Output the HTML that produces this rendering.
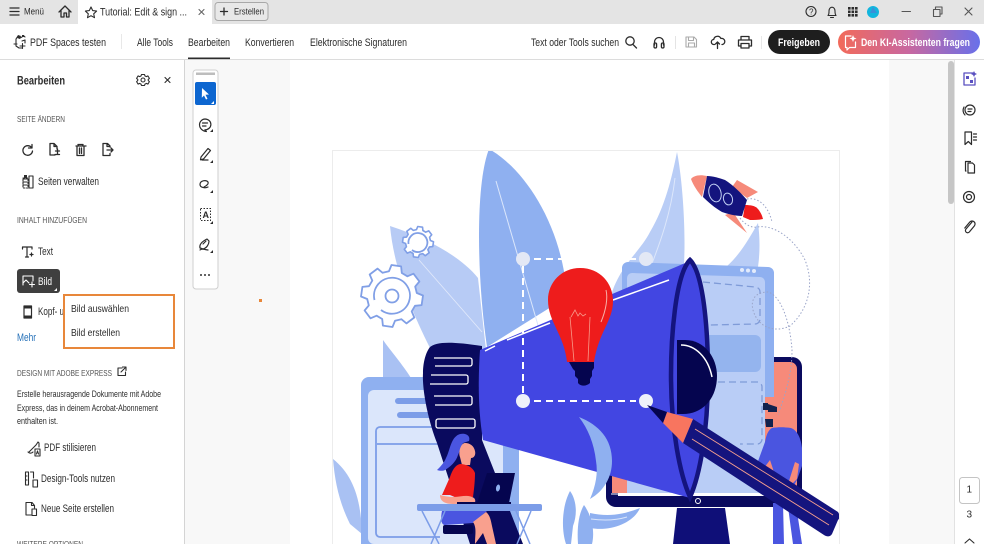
<!DOCTYPE html>
<html lang="de"><head><meta charset="utf-8"><title>Acrobat</title>
<style>
html,body{margin:0;padding:0;background:#fff;width:984px;height:544px;overflow:hidden}
svg{display:block;filter:blur(.3px)}
text{font-family:"Liberation Sans",sans-serif;fill:#2c2c2c}
.i{fill:none;stroke:#2c2c2c;stroke-width:1.1;stroke-linecap:round;stroke-linejoin:round}
.h{font-size:8px;fill:#555}
.d{fill:none;stroke:#fff;stroke-width:2;stroke-dasharray:7 5}
</style></head><body>
<svg xmlns="http://www.w3.org/2000/svg" width="984" height="544" viewBox="0 0 984 544" font-size="10">
<defs>
<linearGradient id="g" x1="0" x2="1" y1="0" y2="0"><stop offset="0" stop-color="#f26a5a"/><stop offset=".5" stop-color="#c868a0"/><stop offset="1" stop-color="#6870ea"/></linearGradient>
<clipPath id="pg"><rect x="333" y="151" width="506" height="393"/></clipPath>
</defs>
<!-- chrome -->
<rect width="984" height="544" fill="#f8f8f8"/>
<rect width="984" height="24" fill="#e4e4e4"/>
<rect x="78" y="0" width="134" height="24" fill="#fff"/>
<rect y="24" width="984" height="35" fill="#fff"/>
<rect y="59" width="984" height="1" fill="#dcdcdc"/>
<rect y="60" width="184" height="484" fill="#fff"/>
<rect x="184" y="60" width="1" height="484" fill="#d4d4d4"/>
<rect x="290" y="60" width="599" height="484" fill="#fff"/>
<rect x="954" y="60" width="30" height="484" fill="#fff"/>
<rect x="954" y="60" width="1" height="484" fill="#e2e2e2"/>
<rect x="948" y="61" width="6" height="143" rx="3" fill="#c6c6c6"/>
<!-- title bar -->
<path class="i" style="stroke-width:1.3" d="M10 8h9M10 11.500h9M10 15h9"/>
<text x="24" y="14.500" font-size="9" textLength="20" lengthAdjust="spacingAndGlyphs">Menü</text>
<path class="i" style="stroke-width:1.3" d="M59 12l6-6 6 6M61 10.500V17h3v-4h2.500v4H69v-6.500"/>
<path class="i" d="M91 7l1.700 3.600 3.900.5-2.900 2.700.8 3.900-3.500-2-3.500 2 .8-3.900-2.900-2.700 3.900-.5z"/>
<text x="100" y="15.500" font-size="11" textLength="87" lengthAdjust="spacingAndGlyphs">Tutorial: Edit &amp; sign ...</text>
<path class="i" style="stroke:#666" d="M199 9.500l5 5M204 9.500l-5 5"/>
<rect x="215" y="2.500" width="53" height="18" rx="3" fill="#e8e8e8" stroke="#a8a8a8"/>
<path class="i" style="stroke-width:1.300" d="M224 8v7M220.500 11.500h7"/>
<text x="234" y="14.500" font-size="9.500" textLength="30" lengthAdjust="spacingAndGlyphs">Erstellen</text>
<!-- title right icons -->
<circle cx="811" cy="11.500" r="5" class="i"/><text x="809" y="14.500" font-size="8">?</text>
<path class="i" d="M828 15.500c1.200-1.400 1-2.500 1-4.500 0-2 1.200-3.800 3-3.800s3 1.800 3 3.800c0 2 0 3.100 1 4.500zM830.500 17.500h3"/>
<g fill="#2c2c2c"><rect x="848" y="7" width="2.600" height="2.600"/><rect x="851.500" y="7" width="2.600" height="2.600"/><rect x="855" y="7" width="2.600" height="2.600"/><rect x="848" y="10.500" width="2.600" height="2.600"/><rect x="851.500" y="10.500" width="2.600" height="2.600"/><rect x="855" y="10.500" width="2.600" height="2.600"/><rect x="848" y="14" width="2.600" height="2.600"/><rect x="851.500" y="14" width="2.600" height="2.600"/><rect x="855" y="14" width="2.600" height="2.600"/></g>
<circle cx="873" cy="12" r="6" fill="#12b5de"/><path d="M873 7l4 6h-7z" fill="#3a8fd8"/>
<path class="i" style="stroke:#555" d="M902 11.500h8.500M933.500 9.500h6.500v7h-6.500zM935.500 9.500V7h6.500v7h-2M965 8l7 7M972 8l-7 7"/>
<!-- toolbar -->
<g transform="translate(-2 0)">
<path class="i" d="M20 36l-2 3v7l3 2h3M16 44h3M22 38l2-1M26 36l1 1M24 41l3-1v3M22 46h5M24.500 43.500v5"/><path d="M20 35l3 1-1 3-3-1zM24 35h2v2h-2z" fill="#2c2c2c"/>
</g>
<text x="30" y="46" font-size="11" textLength="76" lengthAdjust="spacingAndGlyphs">PDF Spaces testen</text>
<rect x="121" y="34" width="1" height="15" fill="#e8e8e8"/>
<text x="137" y="46" font-size="11" textLength="36" lengthAdjust="spacingAndGlyphs">Alle Tools</text>
<text x="188" y="46" font-size="11" textLength="42" lengthAdjust="spacingAndGlyphs">Bearbeiten</text>
<rect x="188" y="57.500" width="42" height="1.600" fill="#2c2c2c"/>
<text x="245" y="46" font-size="11" textLength="49" lengthAdjust="spacingAndGlyphs">Konvertieren</text>
<text x="310" y="46" font-size="11" textLength="97" lengthAdjust="spacingAndGlyphs">Elektronische Signaturen</text>
<text x="531" y="46" font-size="11" textLength="88" lengthAdjust="spacingAndGlyphs">Text oder Tools suchen</text>
<circle cx="630" cy="41" r="4.200" class="i" style="stroke-width:1.300"/><path class="i" style="stroke-width:1.300" d="M633 44.500l3.500 3.500"/>
<path class="i" style="stroke-width:1.300" d="M654.500 45v-3a4.500 4.500 0 0 1 9 0v3"/><rect x="654" y="43" width="2.600" height="5" rx="1.200" class="i" style="stroke-width:1.300"/><rect x="661.400" y="43" width="2.600" height="5" rx="1.200" class="i" style="stroke-width:1.300"/>
<rect x="675" y="36" width="1" height="13" fill="#e4e4e4"/>
<path class="i" style="stroke:#aaa" d="M686 37h8l2.500 2.500V47h-10.500zM688.500 37v3.500h5V37M688.500 47v-4h6v4"/>
<path class="i" style="stroke-width:1.300" d="M714.500 44.500h-.5a2.500 2.500 0 0 1-.3-5 3.800 3.800 0 0 1 7.200-1 3 3 0 0 1 1.600 6h-.5M717.500 48.500v-6.500M715.500 44l2-2 2 2"/>
<path class="i" style="stroke-width:1.300" d="M741 40v-3.500h8V40M741 46h-2.500v-6h13v6H749M741 43.500h8V48h-8z"/>
<rect x="761" y="36" width="1" height="13" fill="#e8e8e8"/>
<rect x="768" y="30" width="62" height="24" rx="12" fill="#1e1e1e"/>
<text x="778" y="46" font-size="11" font-weight="bold" style="fill:#fff" textLength="42" lengthAdjust="spacingAndGlyphs">Freigeben</text>
<rect x="838" y="30" width="142" height="24" rx="12" fill="url(#g)"/>
<path class="i" style="stroke:#fff;stroke-width:1.200" d="M851 36h-5.500v11.500H847v2.500l2.500-2.500h6V42"/><path d="M853 35l1 2.500 2.500 1-2.500 1-1 2.500-1-2.500-2.500-1 2.500-1z" fill="#fff"/>
<text x="861" y="46" font-size="11" font-weight="bold" style="fill:#fff" textLength="109" lengthAdjust="spacingAndGlyphs">Den KI-Assistenten fragen</text>
<!-- left panel -->
<text x="17" y="84.500" font-size="12" font-weight="bold" textLength="48" lengthAdjust="spacingAndGlyphs">Bearbeiten</text>
<circle cx="143" cy="80" r="2" class="i"/><path class="i" d="M141.500 74.500h3l.5 1.500 1.500.6 1.400-.7 1.500 2.500-1.200 1 .1 1.200 1.100 1-1.500 2.500-1.400-.7-1.500.7-.5 1.400h-3l-.5-1.400-1.500-.7-1.400.7-1.500-2.500 1.100-1 .1-1.200-1.200-1 1.500-2.500 1.400.7 1.500-.6z"/>
<path class="i" d="M165 77.500l5 5M170 77.500l-5 5"/>
<text x="17" y="122" class="h" textLength="48" lengthAdjust="spacingAndGlyphs">SEITE ÄNDERN</text>
<path class="i" style="stroke-width:1.300" d="M31.500 147.500a4.800 4.800 0 1 0 1 3.500M32 144.500v3.500h-3.500"/>
<path class="i" style="stroke-width:1.300" d="M55 155h-5v-11.500h4l3 3V149M54 143.500v3h3M55.500 151h4M57.500 149v5.500M55 154.500h4.500"/>
<path class="i" style="stroke-width:1.300" d="M76 146h10M78.500 146l-.5-1.500h5l-.5 1.500M77 146v9.500h7V146M79.500 148v5.500M81.500 148v5.500"/>
<path class="i" style="stroke-width:1.300" d="M110 147v-1l-2.500-2.500H103v12h7v-2M107 143.500v3h3M107 150h6M111 148l2 2-2 2"/>
<path class="i" d="M29 176h4v12h-4zM23 179h4M23 182h4M23 185h4"/><path class="i" style="stroke-dasharray:1.500 1.500" d="M23 178h5v10h-5z"/><path d="M24 175h3v3h-3z" fill="#2c2c2c"/>
<text x="38" y="185" font-size="11" textLength="61" lengthAdjust="spacingAndGlyphs">Seiten verwalten</text>
<text x="17" y="223" class="h" textLength="70" lengthAdjust="spacingAndGlyphs">INHALT HINZUFÜGEN</text>
<path class="i" style="stroke-width:1.200" d="M22.500 249v-2h9.500v2M27 247v10M25.500 257h3M30 254.500h3M31.500 253v3"/>
<text x="38" y="255" font-size="11" textLength="15" lengthAdjust="spacingAndGlyphs">Text</text>
<rect x="17" y="269" width="43" height="24" rx="3" fill="#3f3f3f"/>
<path class="i" style="stroke:#fff" d="M23 285v-9h10v5M23 283l3-3 3 3M32 282v5M29.500 284.500h5"/>
<text x="38" y="285" font-size="11" style="fill:#fff" textLength="14" lengthAdjust="spacingAndGlyphs">Bild</text>
<path d="M57 288v3h-3z" fill="#fff"/>
<path class="i" style="stroke-width:1.200" d="M24 306h7.500v12H24z"/><path d="M24 306h7.500v2.500H24zM24 315.500h7.500v2.500H24z" fill="#2c2c2c"/>
<text x="38" y="315" font-size="11" textLength="35" lengthAdjust="spacingAndGlyphs">Kopf- und</text>
<text x="17" y="341" font-size="11" style="fill:#2470b8" textLength="19" lengthAdjust="spacingAndGlyphs">Mehr</text>
<rect x="64" y="295" width="110" height="53" fill="#fff" stroke="#e8873a" stroke-width="2"/>
<text x="71" y="312" font-size="10.500" textLength="58" lengthAdjust="spacingAndGlyphs">Bild auswählen</text>
<text x="71" y="336" font-size="10.500" textLength="49" lengthAdjust="spacingAndGlyphs">Bild erstellen</text>
<text x="17" y="376" class="h" textLength="95" lengthAdjust="spacingAndGlyphs">DESIGN MIT ADOBE EXPRESS</text>
<path class="i" d="M122 368h-4v7.500h7.500V372M121 372l4.500-4.500M122.500 367h3.500v3.500"/>
<text x="17" y="397" font-size="9.500" textLength="144" lengthAdjust="spacingAndGlyphs">Erstelle herausragende Dokumente mit Adobe</text>
<text x="17" y="411" font-size="9.500" textLength="141" lengthAdjust="spacingAndGlyphs">Express, das in deinem Acrobat-Abonnement</text>
<text x="17" y="424" font-size="9.500" textLength="41" lengthAdjust="spacingAndGlyphs">enthalten ist.</text>
<path class="i" d="M29 452l7-7 2-3 1 1v4M28 452c2 2 4 1 5 0M35 449h5v7h-5zM36.500 454l1-3 1 3"/>
<text x="44" y="451" font-size="11" textLength="52" lengthAdjust="spacingAndGlyphs">PDF stilisieren</text>
<path class="i" d="M25.500 472h3v13h-3zM30.500 472h3v6M33 480h4.500v7H33zM25.500 476h1.500M25.500 480h1.500"/>
<text x="41" y="482" font-size="11" textLength="74" lengthAdjust="spacingAndGlyphs">Design-Tools nutzen</text>
<path class="i" d="M31 515h-5v-12.500h6l2.500 3V508M31.500 502.500v3h3M32 509h4.500v6.500H32z"/>
<text x="41" y="512" font-size="11" textLength="73" lengthAdjust="spacingAndGlyphs">Neue Seite erstellen</text>
<text x="17" y="547" class="h" textLength="66" lengthAdjust="spacingAndGlyphs">WEITERE OPTIONEN</text>
<!-- floating tools -->
<rect x="193" y="70" width="25" height="219" rx="3" fill="#fff" stroke="#cfcfcf"/>
<rect x="196" y="72.500" width="19" height="2.500" fill="#bdbdbd"/>
<rect x="195" y="82" width="21" height="23" rx="2" fill="#0d66d0"/>
<path d="M202 88l7 6.500-3.500.3 2 4-1.500.7-2-4-2.200 2.300z" fill="#fff"/><path d="M214 101v3h-3z" fill="#fff"/>
<path class="i" style="stroke-width:1.200" d="M205 119a5.500 5 0 1 1-.1 10.800l1.500 1.700c-4-.5-6.900-3.200-6.900-6.700 0-3 2.500-5.800 5.500-5.800zM202.500 123h5M202.500 126h3.500"/>
<path d="M213 129v3h-3zM213 160v3h-3zM213 190v3h-3zM213 221v3h-3zM213 250v3h-3z" fill="#2c2c2c"/>
<path class="i" style="stroke-width:1.200" d="M201 157l7-8.500 2.500 2-7 8.500-3 .8zM202 160h6"/>
<path class="i" style="stroke-width:1.200" d="M208 182c-2-2.500-8-1.500-8 2.500 0 3 5 4 8 2.500M204 187c2-1 5-3 4-5"/>
<rect x="200.500" y="208.500" width="10" height="12" fill="none" stroke="#2c2c2c" stroke-dasharray="1.500 1.500"/>
<text x="202.500" y="218" font-size="9" font-weight="bold">A</text>
<path class="i" style="stroke-width:1.200" d="M200 248c-1-4 3-7 7-9l2 2c0 3-2 7-6 8zM203 244l3-3M200 250c2-2 6 0 8 0"/>
<g fill="#333"><circle cx="201" cy="275" r="1"/><circle cx="205" cy="275" r="1"/><circle cx="209" cy="275" r="1"/></g>
<rect x="259" y="299" width="3" height="3" fill="#e8873a"/>
<!-- right rail -->
<path class="i" style="stroke:#5a50c0;stroke-width:1.300" d="M973 73h-9v12h11v-7"/><path d="M966 76h3v3h-3zM970 80h3v3h-3zM974 71l1 2 2 1-2 1-1 2-1-2-2-1 2-1z" fill="#5a50c0"/>
<circle cx="970" cy="110" r="5" class="i" style="stroke-width:1.200"/><path class="i" style="stroke-width:1.200" d="M965 115a6.500 6.500 0 0 1-1-8M968 109h4M968 111.500h3"/>
<path class="i" style="stroke-width:1.200" d="M965 132h6.500v12.500l-3.200-3-3.300 3zM973.500 134h3M973.500 137h3M973.500 140h3"/>
<path class="i" style="stroke-width:1.200" d="M968 173h6.500v-8l-2-2H968zM966 171h-.5v-9.500h5"/>
<circle cx="969" cy="197" r="5.500" class="i" style="stroke-width:1.200"/><circle cx="969" cy="197" r="2.500" class="i" style="stroke-width:1.200"/>
<path class="i" style="stroke-width:1.200" d="M972 222l-6 7a2.200 2.200 0 0 0 3.300 3l5-6a3 3 0 0 0-4.500-4l-5 6"/>
<rect x="959.500" y="477.500" width="20" height="26" rx="3" fill="#fff" stroke="#c4c4c4"/>
<text x="966.500" y="492.500" font-size="10">1</text><text x="966.500" y="517.500" font-size="10">3</text>
<path class="i" d="M965 543l4.500-4 4.500 4"/>
<!-- page image -->
<path d="M332.500 544V150.500H839.500V544" fill="#fff" stroke="#ececec"/>
<g clip-path="url(#pg)">
<!-- leaves -->
<path d="M333 459c20 16 28 40 29 75l-12-10c-10-20-15-40-17-65z" fill="#a9c1f3"/>
<path d="M383 340c7 10 20 25 28 38h-28z" fill="#a9c1f3"/>
<path d="M390 226c40 13 72 32 88 52l8 72-56-2c-20-40-36-80-40-122z" fill="#b7cbf5"/>
<path d="M419 260l63 72" stroke="#e2eafb" fill="none" stroke-width=".8"/>
<path d="M489 149c-14 36-12 130-2 198l80-50c-4-70-42-128-78-148z" fill="#8fb0f0"/>
<path d="M496 181l46 158" stroke="#dbe6fb" stroke-width="1" fill="none"/>
<path d="M677 152c5 25 9 75 7 112l-74 36c7-32 30-48 40-68 15-25 22-55 27-80z" fill="#b9cdf6"/>
<path d="M675 178c-4 35-15 65-24 88" stroke="#dde7fb" fill="none"/>
<path d="M758 223c2 15 2 30 0 44h-32c14-12 24-30 32-44z" fill="#b9cdf6"/>
<!-- gears -->
<g fill="#fff" stroke="#809fe6" stroke-width="1.800" stroke-linejoin="round">
<path d="M389 271.200L391.500 265 401.100 266.400 401.800 273 407.400 276.300 413.500 273.700 419.400 281.500 415.200 286.600 416.800 293 423 295.500 421.600 305.100 415 305.800 411.700 311.400 414.300 317.500 406.500 323.400 401.400 319.200 395 320.800 392.500 327 382.900 325.600 382.200 319 376.600 315.700 370.500 318.300 364.600 310.500 368.800 305.400 367.200 299 361 296.500 362.400 286.900 369 286.200 372.300 280.600 369.700 274.500 377.500 268.600 382.600 272.800z"/>
<path fill="none" d="M374.500 300A18 18 0 1 1 381 310"/><circle cx="392" cy="296" r="6.500" fill="none"/>
<path transform="translate(418 242) scale(.5) translate(-392 -296)" stroke-width="3.200" d="M389 271.200L391.500 265 401.100 266.400 401.800 273 407.400 276.300 413.500 273.700 419.400 281.500 415.200 286.600 416.800 293 423 295.500 421.600 305.100 415 305.800 411.700 311.400 414.300 317.500 406.500 323.400 401.400 319.200 395 320.800 392.500 327 382.900 325.600 382.200 319 376.600 315.700 370.500 318.300 364.600 310.500 368.800 305.400 367.200 299 361 296.500 362.400 286.900 369 286.200 372.300 280.600 369.700 274.500 377.500 268.600 382.600 272.800z"/>
<path fill="none" d="M408.500 244A9.500 9.500 0 1 1 412 250"/>
</g>
<!-- monitor -->
<path d="M773 357h19a10 10 0 0 1 10 10v130a10 10 0 0 1-10 10H616a10 10 0 0 1-10-10v-30h12v29h155z" fill="#0a0a5e"/>
<path d="M774 362h16a7 7 0 0 1 7 7v124h-32v-96h9z" fill="#f68a7a"/>
<rect x="612" y="476" width="18" height="17" fill="#f68a7a"/>
<path d="M611 494h170" stroke="#fff" fill="none"/>
<circle cx="698" cy="501" r="2.500" fill="none" stroke="#fff"/>
<path d="M677 508h48l5 36h-57z" fill="#0f0f78"/>
<!-- left window -->
<path d="M369 377h150v167H361V385a8 8 0 0 1 8-8z" fill="#8fb0f0"/>
<rect x="368" y="390" width="135" height="154" rx="6" fill="#dbe6fb"/>
<rect x="395" y="398" width="40" height="6" rx="3" fill="#7c9de8"/><rect x="397" y="412" width="40" height="6" rx="3" fill="#7c9de8"/>
<path d="M438 427h-58a4 4 0 0 0-4 4v102a4 4 0 0 0 4 4h60M377 444h70" fill="none" stroke="#7c9de8" stroke-width="1.800"/>
<!-- right window -->
<path d="M628 262l140 5a6 6 0 0 1 6 6v124H622V268a6 6 0 0 1 6-6z" fill="#8fb0f0"/>
<path d="M632 273l128 4a5 5 0 0 1 5 5v211H627V278a5 5 0 0 1 5-5z" fill="#b9cdf6"/>
<rect x="700" y="335" width="61" height="37" rx="6" fill="#94b4ee"/>
<circle cx="742" cy="270" r="2" fill="#e3ebfb"/><circle cx="748" cy="270.500" r="2" fill="#e3ebfb"/><circle cx="754" cy="271" r="2" fill="#e3ebfb"/>
<g fill="none" stroke="#7f9bd8" stroke-width="1.300" stroke-dasharray="7 4"><path d="M703 282l52 5a5 5 0 0 1 5 5v27a5 5 0 0 1-5 5l-45 1"/><path d="M718 382h40a5 5 0 0 1 4 5v52a5 5 0 0 1-4 5h-18"/></g>
<!-- trajectory -->
<g fill="none" stroke="#9aa4c8" stroke-width="1" stroke-dasharray="1.500 2">
<path d="M747 199C758 197 768 205 772 222M740 218C745 225 752 228 757 227C775 224 795 240 805 260C815 285 808 310 790 326C775 333 758 328 753 310C750 298 757 292 768 292C780 295 790 320 792 350C792 375 785 395 778 415"/>
</g>
<!-- navy paper -->
<path d="M430 347C436 342 450 341 482 346L482 440 523 544 470 544 437 443C428 420 422 390 423 373 423 362 426 352 430 347z" fill="#0a0a5e"/>
<g fill="none" stroke="#fff" stroke-width="1.300">
<path d="M434 358h36a2 2 0 0 1 2 2v4a2 2 0 0 1-2 2h-35"/><path d="M431 375h35a2 2 0 0 1 2 2v5a2 2 0 0 1-2 2h-36"/><path d="M434 396h36a2 2 0 0 1 2 2v5a2 2 0 0 1-2 2h-35"/><path d="M438 419h35a2 2 0 0 1 2 2v5a2 2 0 0 1-2 2h-35a2 2 0 0 1-2-2v-5a2 2 0 0 1 2-2z"/>
</g>
<!-- megaphone -->
<path d="M480 350L690 261 690 498 590 470 483 440C478 410 478 380 480 350z" fill="#4246e2"/>
<path d="M485 351l10-5M507 340l43-17M613 300l56-20" fill="none" stroke="#fff" stroke-width="1.500"/>
<path d="M690 260C705 275 708 340 708 375 708 430 700 475 690 497 680 475 671 430 671 375 671 340 675 275 690 260z" fill="#4246e2" stroke="#14147e" stroke-width="4.500"/>
<path d="M677 340h8c20 0 32 18 32 36 0 22-14 38-34 38h-6z" fill="#05054f"/>
<path d="M681 345c14 0 27 12 31 32" fill="none" stroke="#fff" stroke-width="1.500"/>
<path d="M579 417c20 8 33 22 33 44 0 16-8 30-22 38 6-14 8-26 6-38-2-18-8-32-17-44z" fill="#8fb0f0"/>
<!-- plant -->
<g fill="#8fb0f0"><path d="M570 491c6 8 8 22 3 35l-2 18h-5c-5-15-4-38 4-53z"/><path d="M584 505c-6 10-7 25-6 39h14c3-12 0-28-8-39z"/><path d="M590 513c18 4 32 2 50-5-6 14-28 24-50 20z"/></g>
<path d="M591 519c14 2 26 1 36-2" stroke="#dbe6fb" fill="none"/>
<!-- dashes -->
<path class="d" d="M523 266V396"/><path class="d" d="M534 259H636"/><path class="d" d="M534 401H636"/>
<circle cx="523" cy="259" r="7" fill="#e3e8f5"/><circle cx="646" cy="259" r="7" fill="#e3e8f5"/><circle cx="523" cy="401" r="7" fill="#eef1fa"/><circle cx="646" cy="401" r="7" fill="#eef1fa"/>
<!-- bulb -->
<path d="M580 268c20 0 33 15 33 33 0 20-14 30-19 61h-27c-3-28-19-40-19-62 0-18 14-32 32-32z" fill="#ee1c1c"/>
<path d="M569 362h25v6l-2 3v5l-2 3v4c-3 3-9 4-12 0v-4l-3-3v-5l-2-2z" fill="#05054f"/>
<g fill="none" stroke="#f89a8a" stroke-width=".8"><path d="M570 317l4 44M590 317l-2 44M571 317l4-7 3 6 2-3 3 3 3-2"/></g>
<path d="M606 290c2 8 0 20-5 32" fill="none" stroke="#f8b0a8" stroke-width="1"/>
<!-- rocket -->
<path d="M707 176c-8-2-14 0-16 3 2 6 7 13 11 18z" fill="#f68a7a"/>
<path d="M737 180l21 12-11 6-15-11zM725 215l8-3 14 21z" fill="#f68a7a"/>
<path d="M745 205c6 0 10 1 12 3 3 3 5 7 6 11-5 1-9 1-13 1l-7-3z" fill="#ee1c1c"/>
<path d="M707 176c6 0 12 2 18 4 8 5 16 13 22 20l-5 16c-7 0-14-2-20-4-7-4-14-10-19-15z" fill="#14147e"/>
<ellipse cx="715" cy="193" rx="6" ry="9" fill="none" stroke="#c3d1f5" stroke-width="1" transform="rotate(-15 715 193)"/><ellipse cx="728" cy="199" rx="4.500" ry="6" fill="none" stroke="#c3d1f5" stroke-width="1" transform="rotate(-15 728 199)"/>
<!-- woman -->
<path d="M465 434c-5-1-9 1-12 6-3 5-4 12-7 18-2 5-6 9-9 12 3 1 6 1 8 0 5-3 11-8 13-15l5-12 6-2c1-3 0-6-4-7z" fill="#4a55e0"/>
<path d="M465 443c5 0 9 3 10 8 1 4-1 7-4 7l-1 7h-8l-2-8c-2-5 1-14 5-14z" fill="#f9a08e"/>
<path d="M460 464c6 0 13 3 15 9 0 8-1 17-2 24l-16 1-7-3-8 0 8-18c2-6 5-12 10-13z" fill="#ee1c1c"/>
<path d="M440 495c4 1 8 2 14 2 7 0 14-3 20 1 2 2 1 4 1 5l-21 1c-8 0-14-2-14-9z" fill="#f9a08e"/>
<path d="M487 473h28l-6 30h-32z" fill="#05054f"/><rect x="457" y="502" width="54" height="2" fill="#05054f"/>
<ellipse cx="498" cy="488" rx="2" ry="3.500" fill="#8fb0f0" transform="rotate(10 498 488)"/>
<path d="M442 511h45l-14 12-28 2c-3 0-5-4-3-14z" fill="#4a55e0"/>
<rect x="443" y="525" width="30" height="9" rx="2" fill="#05054f"/>
<path d="M422 511l17 33M445 511l-14 33M531 511l-14 33M516 511l14 33" stroke="#7c9de8" stroke-width="1.500" fill="none"/>
<rect x="417" y="504" width="125" height="7" rx="2" fill="#7c9de8"/>
<path d="M486 512c4 3 5 9 6 14l4 18h-9l-4-11-8 11c0-9 2-16-2-22z" fill="#f9a08e"/>
<!-- man -->
<path d="M773 503h10l1 41h-11zM788 507l8-2 6 39h-9z" fill="#4a55e0"/>
<path d="M772 428c6-1 12-1 19 0 6 2 10 10 11 20v18l-5 14-4 7h-16l-4-18-3-9-6 8-7-4 8-22c1-6 3-12 7-14z" fill="#4a55e0"/>
<path d="M799 464l-2 15-5 5-3-3 6-19z" fill="#f68a7a"/>
<path d="M772 411l6 2-1 14h-5z" fill="#f68a7a"/>
<path d="M765 419h8v8h-7zM763 403h5v7h-5zM768 404l9 3v5h-9z" fill="#12224e"/>
<!-- pencil -->
<path d="M693 419L838 512c2 3 2 6 0 8l-6 14c-2 3-5 3-8 1L683 443z" fill="#14147e"/>
<path d="M667 412L693 419 683 443 663 423z" fill="#f8755f"/>
<path d="M647 405L667 412 663 423z" fill="#05054f"/>
<path d="M695 429L833 515M692 439L829 525" stroke="#f8a08e" stroke-width=".9" fill="none"/>
</g>
</svg>
</body></html>
